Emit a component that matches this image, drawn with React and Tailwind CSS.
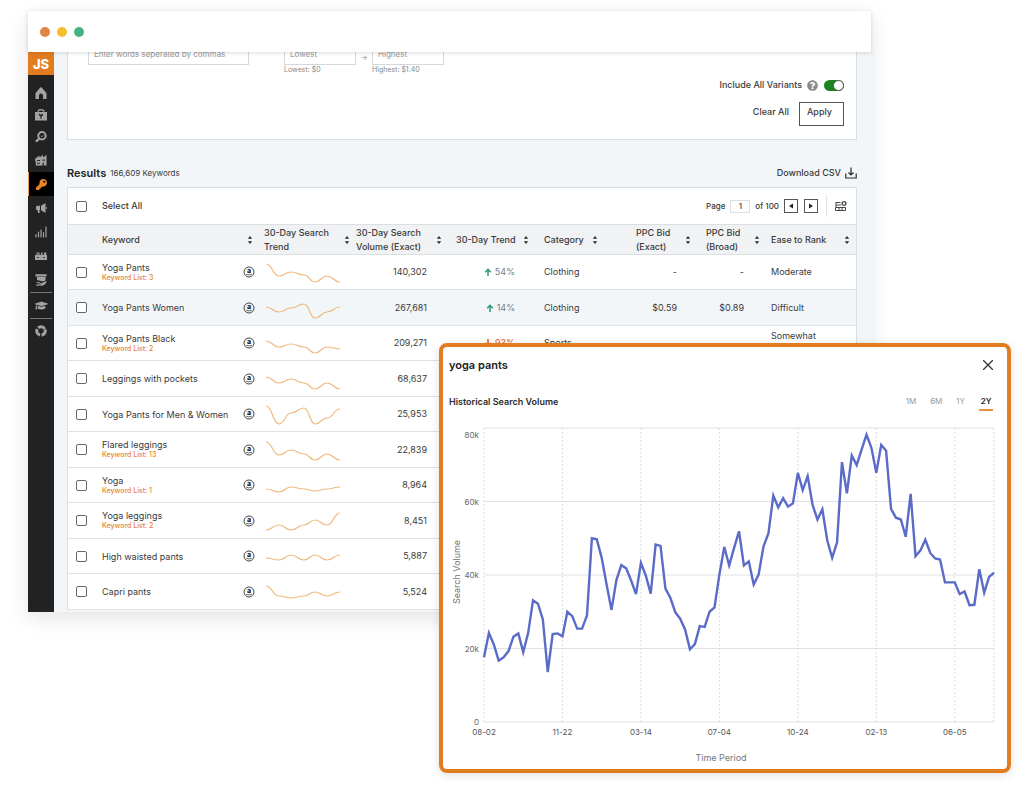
import React, { useState } from 'react';
import { FaKey, FaGraduationCap, FaQuestionCircle } from 'react-icons/fa';

const keywords = [
  { name: 'Yoga Pants', list: 3, volume: '140,302', trend: 54, category: 'Clothing', exact: '-', broad: '-', ease: 'Moderate', spark: [6, 18, 14, 17, 24, 18, 24] },
  { name: 'Yoga Pants Women', volume: '267,681', trend: 14, category: 'Clothing', exact: '$0.59', broad: '$0.89', ease: 'Difficult', spark: [13, 18, 14, 10, 24, 18, 13] },
  { name: 'Yoga Pants Black', list: 2, volume: '209,271', trend: -93, category: 'Sports', exact: '-', broad: '-', ease: 'Somewhat Difficult', spark: [12, 18, 15, 18, 24, 18, 20] },
  { name: 'Leggings with pockets', volume: '68,637', spark: [12, 18, 14, 18, 24, 18, 24] },
  { name: 'Yoga Pants for Men & Women', volume: '25,953', spark: [6, 24, 13, 8, 24, 18, 9] },
  { name: 'Flared leggings', list: 13, volume: '22,839', spark: [6, 19, 14, 18, 24, 18, 24] },
  { name: 'Yoga', list: 1, volume: '8,964', spark: [18, 21, 16, 18, 20, 18, 16] },
  { name: 'Yoga leggings', list: 2, volume: '8,451', spark: [23, 18, 23, 18, 13, 18, 6] },
  { name: 'High waisted pants', volume: '5,887', spark: [16, 18, 13, 18, 13, 18, 13] },
  { name: 'Capri pants', volume: '5,524', spark: [8, 18, 20, 18, 14, 18, 14] },
];

const columns = [
  { label: 'Keyword', pad: 'pr-[10px]' },
  { label: '30-Day Search Trend', pad: 'pr-[5px]' },
  { label: '30-Day Search Volume (Exact)', pad: 'pr-[13px]' },
  { label: '30-Day Trend', pad: 'pr-[14px]' },
  { label: 'Category', pad: 'pr-[37px]' },
  { label: 'PPC Bid (Exact)', pad: 'pr-[14px]' },
  { label: 'PPC Bid (Broad)', pad: 'pr-[10px]' },
  { label: 'Ease to Rank', pad: 'pr-[5px]' },
];

// weekly search volume, in thousands
const history = [
  17.6, 24.2, 21.1, 16.7, 17.6, 19.3, 23.2, 24.1, 19, 24.2, 33.1, 32.2, 27.9, 13.6, 23.9, 24.1,
  23.3, 30, 28.8, 25.4, 25.4, 29, 50, 49.7, 44.7, 37.4, 30.5, 38.6, 42.7, 41.8, 38.5, 34.8,
  43.3, 39.8, 34.9, 48.3, 47.9, 36.3, 33.8, 29.9, 28.1, 25.2, 19.8, 21.2, 26.1, 25.9, 30, 31.2,
  40.1, 47.6, 42.6, 47.4, 51.9, 42.6, 43.7, 37.4, 40.1, 47.8, 51.3, 61.6, 58.4, 60.9, 58.6, 59.5,
  67.8, 63.1, 66.9, 59.1, 55.1, 57.9, 49.4, 44.7, 48.9, 70.7, 62.2, 72.5, 69.9, 74.1, 78.2, 74.6,
  67.8, 75.4, 73.8, 58, 55.6, 55.1, 50.4, 62.1, 45.1, 46.7, 49.6, 46, 44.5, 44.2, 38, 38,
  38, 34.8, 35.5, 31.8, 31.9, 41.6, 35.2, 39.5, 40.6,
];

const dates = ['08-02', '11-22', '03-14', '07-04', '10-24', '02-13', '06-05'];

const HomeIcon = () => (
  <svg viewBox="0 0 12 12" className="w-3 h-3" fill="currentColor">
    <path d="M6 0 7.8 1.8 11.5 6.3V12H8V8.4a2 2 0 0 0-4 0V12H.5V6.3L4.2 1.8Z" />
  </svg>
);

const CaseIcon = () => (
  <svg viewBox="0 0 12 12" className="w-3 h-3" fill="currentColor">
    <path d="M3 2.8C3 1 4 .6 6 .6s3 .4 3 2.2" fill="none" stroke="currentColor" strokeWidth="1.2" />
    <path fillRule="evenodd" d="M0 3h12v8.5H0ZM4 4.6c-.6 1.4.3 2.3 1.4 2.8v2.4h1.2V7.4C7.7 6.9 8.6 6 8 4.6L6.6 5.5H5.4Z" />
  </svg>
);

const SearchIcon = () => (
  <svg viewBox="0 0 12 12" className="w-3 h-3" fill="none" stroke="currentColor">
    <circle cx="7" cy="4.8" r="3.7" strokeWidth="2" />
    <path d="M4.2 7.6.9 10.6" strokeWidth="2.2" />
    <path d="m5.8 4.8 1 1 1.600-1.600" strokeWidth=".9" />
  </svg>
);

const StoreIcon = () => (
  <svg viewBox="0 0 12 12" className="w-3 h-3" fill="currentColor">
    <path fillRule="evenodd" d="M.3 4.500 4.500 1.500v2L8 .8v2.700L11.500 1v10.500H8.800V8.500H7.600v3H.8V7.500L0 6.500ZM2 6v1h3V6ZM2 8.800v1h3v-1ZM7.500 5.500v1.200h2.300V5.500Z" />
  </svg>
);

const HornIcon = () => (
  <svg viewBox="0 0 12 12" className="w-3 h-3" fill="currentColor">
    <path d="M10.500 1v10L6 8.300V3.700ZM5 3.800v4.400H4.200L5 11H3.200L2.400 8 1 7.400V4.600L2.400 3.800Z" />
    <path d="M11.400 5v2" stroke="currentColor" strokeWidth=".8" />
  </svg>
);

const BarsIcon = () => (
  <svg viewBox="0 0 12 12" className="w-3 h-3" stroke="currentColor" strokeWidth="1.2" strokeLinecap="round">
    <path d="M1 8.500v2.500M3.500 6v5M6 4v7M8.500 6.500v4.500M11 1v10" />
  </svg>
);

const RulerIcon = () => (
  <svg viewBox="0 0 12 12" className="w-3 h-3" fill="currentColor">
    <path fillRule="evenodd" d="M0 5h1.500V2.500h3V5H6V3l1.500-1v3H9V2.500h2.200V5H12v5H0ZM2.300 3.500v1h1.400v-1ZM2 7.200v.9h2v-.9ZM8 7.200v.9h2v-.9Z" />
  </svg>
);

const HandIcon = () => (
  <svg viewBox="0 0 12 12" className="w-3 h-3" fill="currentColor">
    <path d="M.5.3h11v2.200H.5ZM2 3h8.500v3.500L8 7.500 2 6ZM.5 8.500 3.500 8l3 1.200L11.500 7c.3 2-2 4.500-5 4.800L.5 11.500l1.500-1.300 4 .3.300-.6Z" />
  </svg>
);

const ChromeIcon = () => (
  <svg viewBox="0 0 12 12" className="w-3 h-3" fill="none" stroke="currentColor" strokeWidth="3">
    <circle cx="6" cy="6" r="4.200" strokeDasharray="7.400 1.400" transform="rotate(-20 6 6)" />
  </svg>
);

const AmazonIcon = () => (
  <svg viewBox="0 0 12 12" className="w-3 h-3 shrink-0" role="img" aria-label="Amazon">
    <circle cx="6" cy="6" r="5" fill="none" stroke="#444" strokeWidth="1" />
    <text x="6" y="7" textAnchor="middle" fontSize="7" fontWeight="800" fill="#222">a</text>
    <path d="M3.2 8.2q2.8 1.5 5.6 0" fill="none" stroke="#444" strokeWidth=".8" />
  </svg>
);

const SortIcon = () => (
  <svg viewBox="0 0 8 10" className="w-2 h-2.5 shrink-0" fill="#2b2b2b">
    <path d="M4 1 6.200 3.800H1.800ZM4 9 1.800 6.200h4.400Z" />
  </svg>
);

const DownloadIcon = () => (
  <svg viewBox="0 0 12 12" className="w-3 h-3" fill="none" stroke="#2b2b2b" strokeWidth="1.2">
    <path d="M.8 6.500v4.500h10.400V6.500M6 .5v7.500M3.500 5.500 6 8l2.500-2.500" />
  </svg>
);

const ColumnsIcon = () => (
  <svg viewBox="0 0 12 12" className="w-3 h-3" fill="none" stroke="#444">
    <path d="M5.500 2.500H1M1 5h5M.5 7.500h10v3H.5ZM4 7.500v3M7 7.500v3M1 2v5" strokeWidth="1" />
    <circle cx="9" cy="3.500" r="1.900" strokeWidth="1.400" />
  </svg>
);

const Arrow = ({ down }) => (
  <svg viewBox="0 0 8 8" className={`w-2 h-2 ${down ? 'rotate-180 text-[#e2572b]' : 'text-[#2f9c70]'}`} fill="none" stroke="currentColor" strokeWidth="1.5">
    <path d="M4 8V1.500M1.200 4.200 4 1.400l2.800 2.800" />
  </svg>
);

const Sparkline = ({ points }) => {
  const xs = [1, 14, 26, 39, 50, 62, 75];
  let d = `M${xs[0]} ${points[0]}`;
  for (let i = 1; i < points.length; i++) {
    const mid = (xs[i - 1] + xs[i]) / 2;
    d += `C${mid} ${points[i - 1]} ${mid} ${points[i]} ${xs[i]} ${points[i]}`;
  }
  return (
    <svg viewBox="0 0 76 28" className="w-[76px] h-7 ml-px" fill="none" stroke="#efb87c" strokeWidth="1.2">
      <path d={d} />
    </svg>
  );
};

const Checkbox = ({ label, ...props }) => (
  <input
    type="checkbox"
    aria-label={label}
    className="block appearance-none w-[11px] h-[11px] border border-[#666] rounded-xs bg-white checked:bg-[#e27c20] shrink-0"
    {...props}
  />
);

const NavItem = ({ label, children, className = 'h-6' }) => (
  <a href="#" aria-label={label} className={`flex items-center justify-center text-[#a3a3a3] ${className}`}>
    {children}
  </a>
);

const Sidebar = () => (
  <nav className="w-[26px] shrink-0 bg-[#222]">
    <a href="#" className="flex h-[23px] mb-[7px] items-center justify-center bg-[#e27c20] text-white text-[13px] font-extrabold">JS</a>
    <NavItem label="Home" className="h-[22px]"><HomeIcon /></NavItem>
    <NavItem label="Products" className="h-[22px]"><CaseIcon /></NavItem>
    <NavItem label="Search" className="h-[22px]"><SearchIcon /></NavItem>
    <NavItem label="Suppliers"><StoreIcon /></NavItem>
    <a href="#" aria-label="Keywords" className="flex h-6 items-center justify-center bg-black border-l border-[#e9a35f] text-[#e8842a]">
      <FaKey size={11} />
    </a>
    <NavItem label="Promotions"><HornIcon /></NavItem>
    <NavItem label="Analytics"><BarsIcon /></NavItem>
    <NavItem label="Inventory"><RulerIcon /></NavItem>
    <NavItem label="Services"><HandIcon /></NavItem>
    <NavItem label="Academy" className="h-[27px] mx-0.5 border-y border-[#777]"><FaGraduationCap size={13} /></NavItem>
    <NavItem label="Extension"><ChromeIcon /></NavItem>
  </nav>
);

const Filters = () => {
  const [variants, setVariants] = useState(true);
  const field = 'block w-full h-6 pt-0.5 border border-[#d5d8da] bg-white px-[5px] text-[8px] placeholder:text-[#999]';
  return (
    <section className="bg-white border border-t-0 border-[#dcdfe2] pl-5 pr-3 pb-[13px]">
      <div className="flex items-start -mt-[11px] text-[7px] leading-[9px] text-[#888]">
        <input aria-label="Keywords" placeholder="Enter words seperated by commas" className={`${field} max-w-[161px] mr-[35px]`} />
        <label className="w-[72px]">
          <input placeholder="Lowest" className={field} />
          Lowest: $0
        </label>
        <span className="w-4 pt-3 text-center">→</span>
        <label className="w-[72px]">
          <input placeholder="Highest" className={field} />
          Highest: $1.40
        </label>
      </div>
      <div className="flex h-[22px] items-center justify-end">
        <label htmlFor="variants" className="font-medium">Include All Variants</label>
        <FaQuestionCircle size={11} className="ml-[5px] mr-1.5 text-[#8a8a8a]" />
        <span className="relative flex">
          <input
            id="variants"
            type="checkbox"
            checked={variants}
            onChange={() => setVariants(!variants)}
            className="peer appearance-none w-5 h-[11px] rounded-full bg-gray-400 checked:bg-[#1b8420]"
          />
          <span className="absolute top-0 left-0 peer-checked:left-auto peer-checked:right-0 w-[11px] h-[11px] rounded-full bg-white border border-[#555] pointer-events-none" />
        </span>
      </div>
      <div className="flex mt-1.5 justify-end gap-2.5 font-medium">
        <button className="h-6 pb-1">Clear All</button>
        <button className="w-[45px] h-6 pb-1 pr-1 border border-[#555]">Apply</button>
      </div>
    </section>
  );
};

const Results = () => {
  const [selected, setSelected] = useState([]);
  const toggle = (name) =>
    setSelected(selected.includes(name) ? selected.filter((n) => n !== name) : [...selected, name]);

  return (
    <section>
      <div className="flex h-[47px] items-end pb-1.5 leading-4">
        <h1 className="text-[11px] font-semibold text-[#222]">Results</h1>
        <span className="ml-1 text-[8px]">166,609 Keywords</span>
        <button className="ml-auto flex items-center gap-1 font-medium">
          Download CSV <DownloadIcon />
        </button>
      </div>

      <div className="bg-white border border-b-0 border-[#dcdfe2]">
        <div className="flex h-[37px] items-center border-b border-[#dcdfe2] pl-2 pr-[9px]">
          <label className="flex items-center gap-[15px] font-medium">
            <Checkbox
              checked={selected.length === keywords.length}
              onChange={(e) => setSelected(e.target.checked ? keywords.map((k) => k.name) : [])}
            />
            Select All
          </label>
          <div className="ml-auto flex items-center text-[8px] font-medium">
            <label htmlFor="page" className="mr-[5px]">Page</label>
            <input id="page" defaultValue="1" className="w-5 h-[13px] border border-[#dcdfe2] text-center" />
            <span className="mx-[5px]">of 100</span>
            <button aria-label="Previous page" className="flex w-[14px] h-[14px] items-center justify-center border border-[#555]">
              <svg viewBox="0 0 6 6" className="w-1.5 h-1.5" fill="#222"><path d="M5 .5v5L1 3Z" /></svg>
            </button>
            <button aria-label="Next page" className="ml-1.5 flex w-[14px] h-[14px] items-center justify-center border border-[#555]">
              <svg viewBox="0 0 6 6" className="w-1.5 h-1.5" fill="#222"><path d="M1 .5v5L5 3Z" /></svg>
            </button>
            <span className="mx-2 h-[22px] border-l border-[#e2e4e6]" />
            <button aria-label="Edit columns"><ColumnsIcon /></button>
          </div>
        </div>

        <table className="w-full table-fixed border-separate border-spacing-0 text-left">
          <colgroup>
            <col className="w-[34px]" />
            <col className="w-[162px]" />
            <col className="w-[92px]" />
            <col className="w-[100px]" />
            <col className="w-[88px]" />
            <col className="w-[92px]" />
            <col className="w-[70px]" />
            <col className="w-[65px]" />
            <col />
          </colgroup>
          <thead className="bg-[#f0f2f4]">
            <tr>
              <th className="h-[30px] p-0 border-b border-[#dcdfe2]" />
              {columns.map((col) => (
                <th key={col.label} className={`h-[30px] py-0 pl-0 border-b border-[#dcdfe2] font-medium leading-[14px] ${col.pad}`}>
                  <button className="flex w-full items-center justify-between text-left">
                    {col.label} <SortIcon />
                  </button>
                </th>
              ))}
            </tr>
          </thead>
          <tbody className="[&_td]:border-b [&_td]:border-[#dfe3e6] [&_td]:py-0 [&_td]:pl-0">
            {keywords.map((k, i) => (
              <tr key={k.name} className={`${i % 2 ? 'h-9' : 'h-[35px]'} ${i === 1 ? 'bg-[#f3f6f9]' : 'bg-white'}`}>
                <td>
                  <div className="pl-2">
                    <Checkbox label={k.name} checked={selected.includes(k.name)} onChange={() => toggle(k.name)} />
                  </div>
                </td>
                <td className="pr-[9px]">
                  <div className="flex items-center justify-between">
                    <div className="leading-[11px]">
                      <div>{k.name}</div>
                      {k.list && <div className="text-[7px] leading-[10px] font-medium text-[#e8852c]">Keyword List: {k.list}</div>}
                    </div>
                    <AmazonIcon />
                  </div>
                </td>
                <td className="pr-0"><Sparkline points={k.spark} /></td>
                <td className="pr-[29px] text-right">{k.volume}</td>
                <td className="pr-[29px]">
                  {k.trend && (
                    <div className={`flex items-center justify-end gap-[3px] ${k.trend < 0 ? 'text-[#e2572b]' : 'text-[#777d84]'}`}>
                      <Arrow down={k.trend < 0} /> {Math.abs(k.trend)}%
                    </div>
                  )}
                </td>
                <td className="pr-2">{k.category}</td>
                <td className="pr-[29px] text-right">{k.exact}</td>
                <td className="pr-[27px] text-right">{k.broad}</td>
                <td className="pr-6 leading-[14px]">{k.ease}</td>
              </tr>
            ))}
          </tbody>
        </table>
      </div>
    </section>
  );
};

const HistoryChart = () => {
  const left = 35;
  const right = 545;
  const top = 9;
  const bottom = 303;
  const x = (i) => left + ((right - left) * i) / (history.length - 1);
  const y = (v) => bottom - ((bottom - top) * v) / 80;

  return (
    <svg viewBox="0 0 552 350" className="block w-full" role="img" aria-label="Historical search volume">
      {[0, 20, 40, 60, 80].map((v) => (
        <g key={v}>
          <line x1={left} x2={right} y1={y(v)} y2={y(v)} stroke="#dfe1e2" />
          <text x="30" y={v === 80 ? 19 : y(v) + 3} textAnchor="end" fontSize="8" fill="#666">
            {v ? `${v}k` : '0'}
          </text>
        </g>
      ))}
      {dates.map((date, i) => (
        <g key={date}>
          <line x1={x(i * 16)} x2={x(i * 16)} y1={top} y2={bottom} stroke="#dadddf" strokeDasharray="2 2" />
          <text x={x(i * 16)} y="316" textAnchor="middle" fontSize="8" fill="#555">{date}</text>
        </g>
      ))}
      <line x1={right} x2={right} y1={top} y2={bottom} stroke="#dadddf" strokeDasharray="2 2" />
      <polyline
        points={history.map((v, i) => `${x(i)},${y(v)}`).join(' ')}
        fill="none"
        stroke="#5a6bc8"
        strokeWidth="2.4"
      />
      <text x="272" y="342" textAnchor="middle" fontSize="9" fill="#777">Time Period</text>
      <text transform="translate(11 153) rotate(-90)" textAnchor="middle" fontSize="9" fill="#777">Search Volume</text>
    </svg>
  );
};

const HistoryModal = () => {
  const [range, setRange] = useState('2Y');
  return (
    <div role="dialog" aria-label="yoga pants" className="absolute top-[343px] left-[439px] right-[13px] bg-white border-4 border-[#e27c20] rounded-lg px-1.5 shadow-[0_2px_10px_rgba(0,0,0,0.12)]">
      <div className="flex h-9 items-center justify-between pr-2">
        <h2 className="text-[11px] font-semibold text-[#222]">yoga pants</h2>
        <button aria-label="Close">
          <svg viewBox="0 0 10 10" className="w-2.5 h-2.5" stroke="#333" strokeWidth="1.3"><path d="m0 0 10 10M10 0 0 10" /></svg>
        </button>
      </div>
      <div className="flex h-9 items-center justify-between pt-0.5 pr-2">
        <h3 className="font-semibold text-[#2b2b2b]">Historical Search Volume</h3>
        <div className="flex gap-[14px] text-[8px]">
          {['1M', '6M', '1Y', '2Y'].map((r) => (
            <button
              key={r}
              onClick={() => setRange(r)}
              className={`h-[18px] border-b-2 ${r === range ? 'w-[14px] border-[#e8913f] font-semibold text-[#222]' : 'border-transparent text-[#999]'}`}
            >
              {r}
            </button>
          ))}
        </div>
      </div>
      <HistoryChart />
    </div>
  );
};

export default function App() {
  return (
    <div className="relative min-h-screen bg-white pt-[11px] pl-7 pr-[153px] font-['Inter',sans-serif] text-[9px] leading-3 text-[#3a3a3a]">
      <div className="shadow-[0_6px_20px_rgba(0,0,0,0.11)]">
        <div className="relative z-10 flex h-[41px] items-center gap-[7px] bg-white pl-3 shadow-[0_1px_4px_rgba(0,0,0,0.14)]">
          <span className="w-2.5 h-2.5 rounded-full bg-[#e08546]" />
          <span className="w-2.5 h-2.5 rounded-full bg-[#f5bf2f]" />
          <span className="w-2.5 h-2.5 rounded-full bg-[#48b182]" />
        </div>
        <div className="flex overflow-hidden bg-[#f3f6f9]">
          <Sidebar />
          <main className="flex-1 min-w-0 pl-[13px] pr-3.5 pb-0.5">
            <Filters />
            <Results />
          </main>
        </div>
      </div>
      <HistoryModal />
    </div>
  );
}
